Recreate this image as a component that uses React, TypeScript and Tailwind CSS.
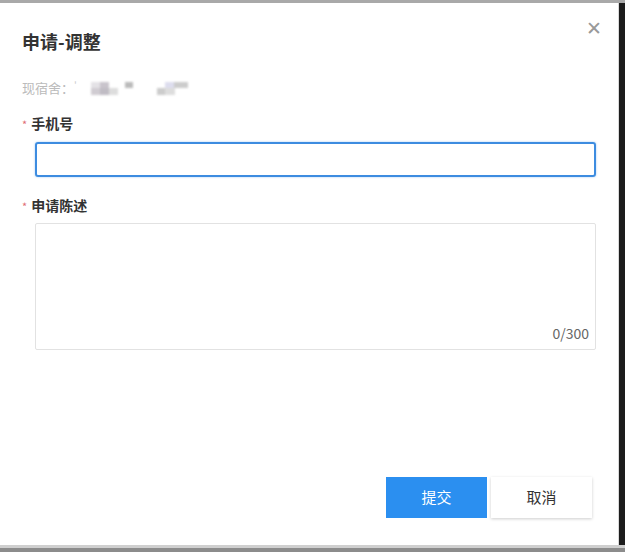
import React from "react";

const font = { fontFamily: '"Noto Sans CJK SC", "Microsoft YaHei", sans-serif' };

export default function App() {
  return (
    <div className="w-[625px] h-[552px] flex flex-col bg-[#8a8a8a] overflow-hidden" style={font}>
      <div className="h-[3px] bg-[#a9a9a9]" />
      <div className="flex flex-1">
        <div className="flex-1 bg-white flex flex-col relative border-r border-[#d9d9d9]">
          <button className="absolute right-[16px] top-[14px] text-[#999] text-[19px] leading-none font-light">
            ✕
          </button>
          <div className="pl-[22px] pt-[25px] text-[18px] leading-[26px] font-bold text-[#333]">申请-调整</div>
          <div className="pl-[22px] mt-[24px] flex items-center h-[20px] text-[13px] text-[#bbb]">
            <span>现宿舍：</span>
            <span className="text-[#ccc] text-[10px] -mt-2">'</span>
            <div className="ml-[14px] flex flex-col blur-[1px]">
              <div className="flex">
                <div className="w-[9px] h-[6px] bg-[#e4e2e6]" />
                <div className="w-[9px] h-[6px] bg-[#c9c4cc]" />
                <div className="w-[16px] h-[6px]" />
                <div className="w-[8px] h-[6px] bg-[#bbb]" />
              </div>
              <div className="flex">
                <div className="w-[9px] h-[7px] bg-[#d0ccd2]" />
                <div className="w-[9px] h-[7px] bg-[#c0bcc4]" />
                <div className="w-[9px] h-[7px] bg-[#ddd]" />
              </div>
            </div>
            <div className="ml-[24px] flex flex-col blur-[1px]">
              <div className="flex pl-[8px]">
                <div className="w-[9px] h-[6px] bg-[#dde]" />
                <div className="w-[14px] h-[6px] bg-[#ccc]" />
              </div>
              <div className="flex">
                <div className="w-[8px] h-[7px] bg-[#ccc]" />
                <div className="w-[10px] h-[7px] bg-[#ddd]" />
              </div>
            </div>
          </div>
          <div className="pl-[22px] mt-[15px] flex items-center h-[20px]">
            <span className="text-[#e06c75] text-[11px] mr-[4px] mt-[3px]">*</span>
            <span className="text-[14px] font-bold text-[#333]">手机号</span>
          </div>
          <div className="pl-[35px] pr-[22px] mt-[9px]">
            <input className="w-full h-[35px] rounded-[3px] border-2 border-[#3d8ce0] outline-none px-2 text-[14px] shadow-[0_0_2px_rgba(45,140,240,0.5)]" />
          </div>
          <div className="pl-[22px] mt-[18px] flex items-center h-[20px]">
            <span className="text-[#e06c75] text-[11px] mr-[4px] mt-[3px]">*</span>
            <span className="text-[14px] font-bold text-[#333]">申请陈述</span>
          </div>
          <div className="pl-[35px] pr-[22px] mt-[8px]">
            <div className="relative h-[127px] border border-[#e2e2e2] rounded-[2px]">
              <textarea className="w-full h-full resize-none outline-none p-2 text-[14px]" />
              <span className="absolute right-[6px] bottom-[5px] text-[14px] text-[#666]">0/300</span>
            </div>
          </div>
          <div className="flex-1" />
          <div className="flex justify-end gap-[4px] pr-[26px] pb-[27px]">
            <button className="w-[101px] h-[41px] bg-[#2b8ff0] text-white text-[15px]">提交</button>
            <button className="w-[101px] h-[41px] bg-white text-[#333] text-[15px] shadow-[0_1px_3px_rgba(0,0,0,0.2)]">取消</button>
          </div>
        </div>
        <div className="w-[6px] bg-[#1c1c1c]" />
      </div>
      <div className="h-[3px] bg-[#cfcfcf]" />
      <div className="h-[4px] bg-[#8c8c8c]" />
    </div>
  );
}
